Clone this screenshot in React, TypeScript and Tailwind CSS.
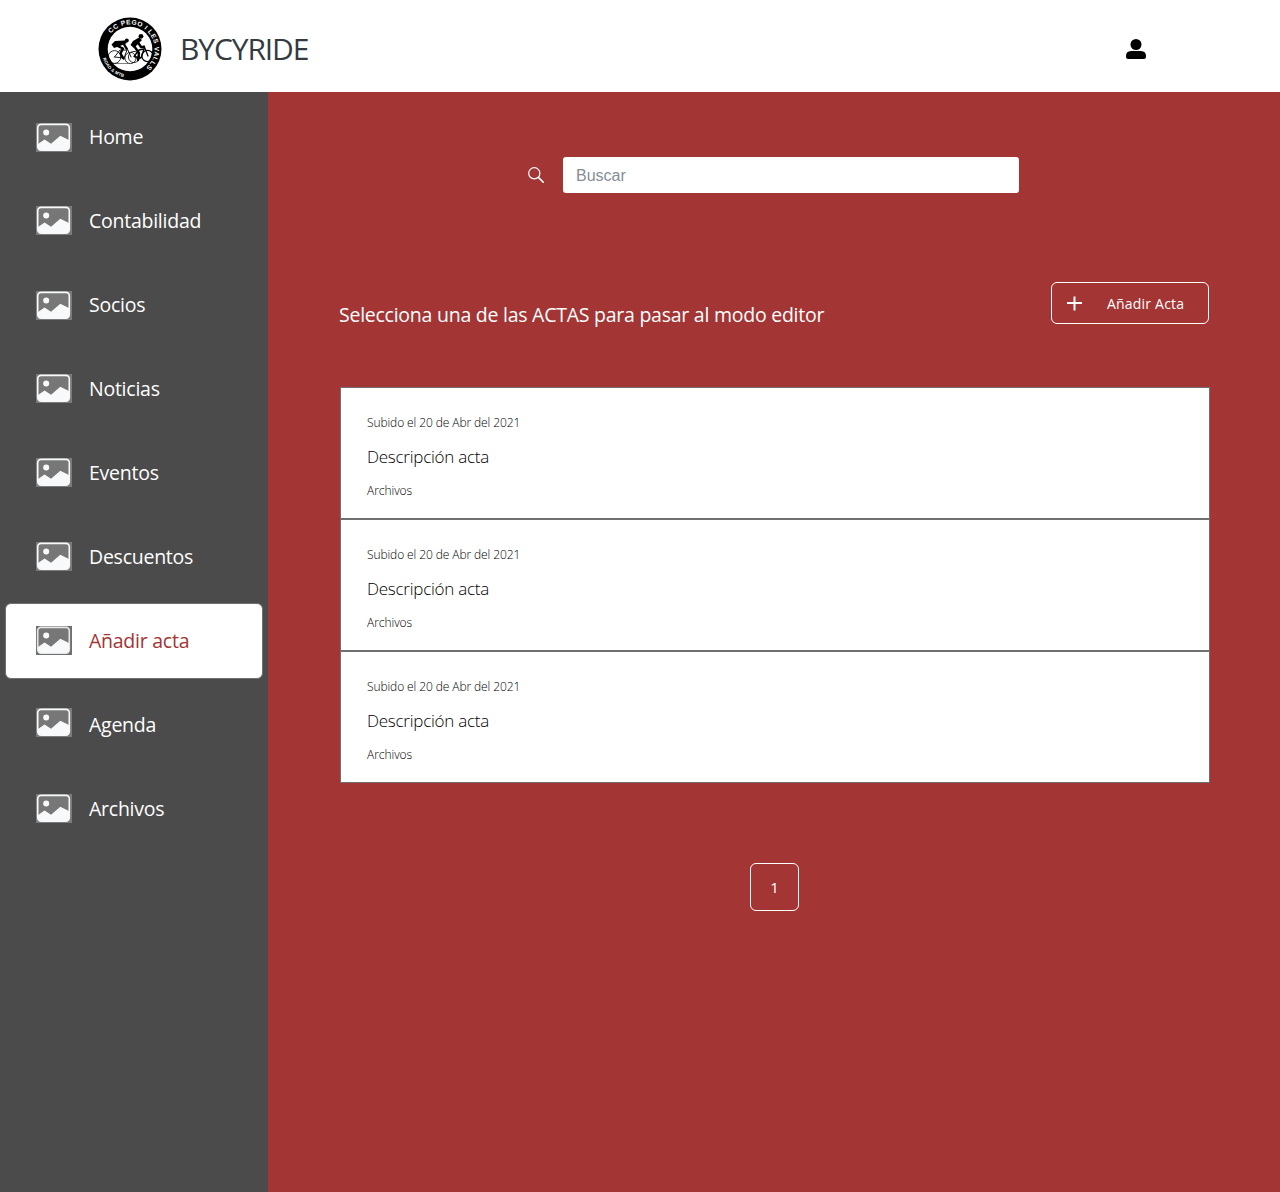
const nav = [
  { label: "Home", shift: "mb-0" },
  { label: "Contabilidad", shift: "mb-px" },
  { label: "Socios", shift: "mb-0" },
  { label: "Noticias", shift: "mb-px" },
  { label: "Eventos", shift: "mb-px" },
  { label: "Descuentos", shift: "mb-px" },
  { label: "Añadir acta", shift: "mb-px", active: true },
  { label: "Agenda", shift: "mb-[5px]" },
  { label: "Archivos", shift: "mb-px" },
];

const actas = [1, 2, 3];

function Logo() {
  return (
    <svg viewBox="0 0 64 64" className="h-16 w-16 shrink-0">
      <defs>
        <path id="top" d="M12.4 17.2 A24.6 24.6 0 1 1 46.1 52.2" />
        <path id="bottom" d="M4.4 40.5 A28.8 28.8 0 0 0 30 60.6" />
      </defs>
      <circle cx="32" cy="32" r="31.5" fill="#000" />
      <circle cx="32" cy="32" r="22.3" fill="#fff" />
      <g fill="#fff" fontFamily="Liberation Sans, sans-serif" fontWeight="700">
        <text fontSize="6.6" textLength="81">
          <textPath href="#top" startOffset="1">CC PEGO I LES VALLS</textPath>
        </text>
        <text fontSize="4.4" textLength="29">
          <textPath href="#bottom" startOffset="1">ROAD &amp; MTB</textPath>
        </text>
      </g>
      <g fill="none" stroke="#000" strokeLinecap="round" strokeLinejoin="round">
        <g strokeWidth="0.8">
          <circle cx="16.5" cy="40" r="6.4" />
          <circle cx="32.5" cy="41" r="5.6" />
          <circle cx="36" cy="40" r="5.6" />
          <circle cx="49.5" cy="39" r="5.6" strokeWidth="1.2" />
        </g>
        <path d="M16.5 40 L22 33 L29 33 L26 41 L16.5 40 M29 31 L33 40" strokeWidth="0.9" />
        <path d="M36 39.5 L41 33 L46 32 L43 41 L36 39.5 M46 29 L50 39" strokeWidth="1.3" />
        <path d="M14 46.5 H30" strokeWidth="0.5" />
        <path d="M18.5 28.5 L25 31.5 L22.5 36.5 L25.5 41.5 M25 25.5 L28.5 31.5" strokeWidth="2.4" />
        <path d="M35 27.5 L38.5 32.5 L41 36 L40 43 M39 24 L43 30 L46 30" strokeWidth="2.3" />
      </g>
      <path d="M13.5 27.5 L17 23.9 L27 23.4 L29 26 L22 29 L16 31 Z" fill="#000" />
      <path d="M32.5 28 L35 24 L41 20.5 L44 23 L40 27 L36 31 Z" fill="#000" />
      <circle cx="28.8" cy="23.4" r="2" fill="#000" />
      <circle cx="43" cy="19.3" r="2.4" fill="#000" />
    </svg>
  );
}

function Picture({ active }: { active?: boolean }) {
  return (
    <svg viewBox="0 0 36 29" className="h-[29px] w-9">
      <rect width="36" height="29" fill={active ? "#707070" : "#7b7b7b"} />
      <rect x="1.7" y="1.4" width="31.6" height="25.8" rx="3.4" fill="#777" stroke={active ? "#e6e6e8" : "#f8f9fa"} strokeWidth="1.6" />
      <circle cx="10.2" cy="9.4" r="3" fill="#f8f9fa" />
      <path d="M2 21 L8.6 16.5 L15 20.8 L24.3 12.7 L33 17 V24.3 Q33 26.9 30.2 26.9 H5 Q2 26.9 2 24 Z" fill="#f8f9fa" />
    </svg>
  );
}

export default function App() {
  return (
    <div className="flex h-[1192px] w-[1280px] flex-col bg-white font-['Open_Sans','Noto_Sans',sans-serif]">
      <header className="flex h-[92px] shrink-0 items-center justify-between pr-[134px] pl-[98px]">
        <div className="flex items-center pt-[5px]">
          <Logo />
          <h1 className="mt-px ml-[18px] text-[30px] leading-9 font-[450] tracking-[-1.1px] text-[#343a40]">BYCYRIDE</h1>
        </div>
        <svg viewBox="0 0 20 20" className="mt-[6px] h-5 w-5">
          <circle cx="10" cy="5.5" r="5.5" fill="#000" />
          <path d="M5 12 H15 Q20 12.2 20 17 V18 Q20 20 18 20 H2 Q0 20 0 18 V17 Q0 12.2 5 12 Z" fill="#000" />
        </svg>
      </header>
      <div className="flex min-h-0 flex-1">
        <nav className="flex w-[268px] shrink-0 flex-col gap-2 bg-[#4b4b4b] px-[5px] pt-[7px]">
          {nav.map((n) => (
            <a
              key={n.label}
              className={
                n.active
                  ? "flex h-[76px] items-center rounded-md border border-[#707070] bg-white pl-[30px] text-[#a33535]"
                  : "flex h-[76px] items-center border border-transparent pl-[30px] text-white"
              }
            >
              <span className={n.shift}>
                <Picture active={n.active} />
              </span>
              <span className="ml-[17px] text-[19.5px] leading-7 tracking-[-0.25px]">{n.label}</span>
            </a>
          ))}
        </nav>
        <main className="flex flex-1 flex-col bg-[#a33535] pt-[65px] pr-[70px] pl-[72px]">
          <div className="flex h-9 items-center pl-[188px]">
            <svg viewBox="0 0 16 16" className="h-4 w-4" fill="none" stroke="#fff">
              <circle cx="6.3" cy="6.3" r="5.6" strokeWidth="1.2" />
              <path d="M10.4 10.4 L15.3 15.3" strokeWidth="1.6" strokeLinecap="round" />
            </svg>
            <input
              placeholder="Buscar"
              className="ml-[19px] h-9 w-[456px] rounded-[3px] bg-white px-[13px] pt-px font-['Liberation_Sans',sans-serif] text-base placeholder:text-[#868e96]"
            />
          </div>
          <div className="mt-[89px] flex h-[42px] items-start justify-between">
            <h2 className="mt-[19px] -ml-px text-[19.5px] leading-7 tracking-[-0.25px] text-white">
              Selecciona una de las ACTAS para pasar al modo editor
            </h2>
            <button className="mr-px flex h-[42px] w-[158px] items-center rounded-md border border-white pl-[15px] text-white">
              <svg viewBox="0 0 15 15" className="h-[15px] w-[15px]" stroke="#fff" strokeWidth="2">
                <path d="M7.5 0.5 V14.5 M0 7 H15" />
              </svg>
              <span className="ml-[25px] text-[14px] tracking-[0.2px]">Añadir Acta</span>
            </button>
          </div>
          <div className="mt-[63px] flex flex-col">
            {actas.map((a) => (
              <article key={a} className="h-[132px] border border-[#707070] bg-white pt-[27px] pl-[26px] font-[350] text-black">
                <p className="text-[12px] leading-4 tracking-[-0.1px]">Subido el 20 de Abr del 2021</p>
                <p className="mt-[14px] text-[17px] leading-6 tracking-[-0.25px]">Descripción acta</p>
                <p className="mt-[14px] text-[12px] leading-4 tracking-[-0.05px]">Archivos</p>
              </article>
            ))}
          </div>
          <button className="mt-20 ml-[410px] flex h-12 w-[49px] items-center justify-center rounded-md border border-white text-[15px] text-white">
            1
          </button>
        </main>
      </div>
    </div>
  );
}
